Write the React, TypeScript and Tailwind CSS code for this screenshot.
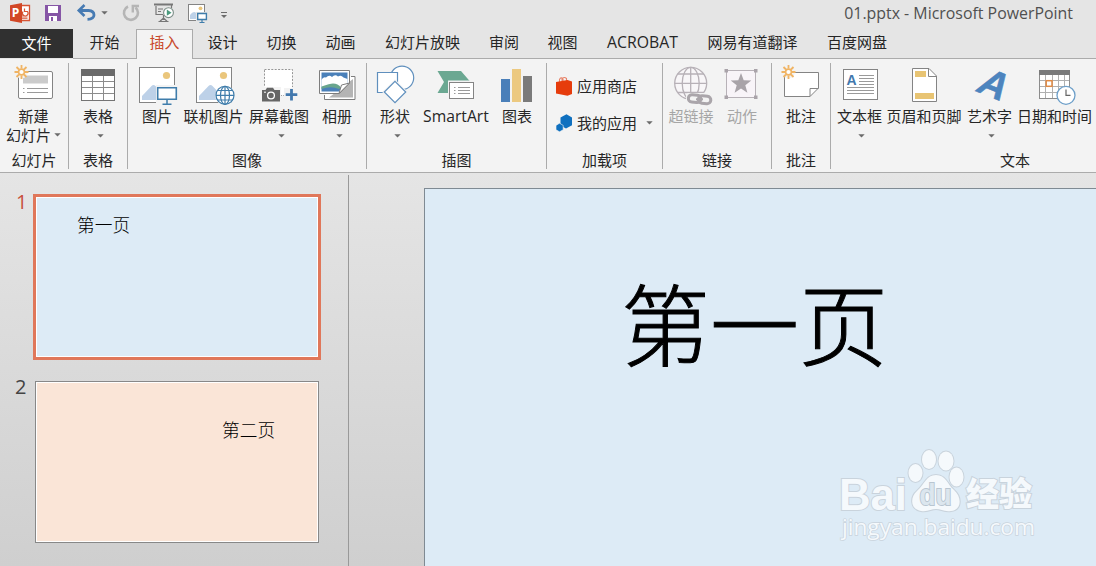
import React from 'react';

/** A single large button in the ribbon. */
interface RibbonButtonProps {
    /** Caption below the icon. */
    label: string;
    /** Tailwind width class of the button. */
    width: string;
    /** Contents of the 44x40 icon. */
    icon: React.ReactNode;
    /** Whether a dropdown caret is shown. */
    caret?: boolean;
    disabled?: boolean;
}

interface RibbonGroupProps {
    title: string;
    width: string;
    children: React.ReactNode;
}

const Caret: React.FC = () => (
    <svg width="7" height="4" viewBox="0 0 7 4" className="shrink-0">
        <path d="M0.3 0.3H6.7L3.5 3.6Z" fill="#6b6b6b" />
    </svg>
);

const RibbonIcon: React.FC<{ children: React.ReactNode }> = ({ children }) => (
    <svg width="44" height="40" viewBox="0 0 44 40" fill="none" className="shrink-0 overflow-visible">{children}</svg>
);

const RibbonButton: React.FC<RibbonButtonProps> = ({ label, width, icon, caret, disabled }) => (
    <div className={`flex shrink-0 flex-col items-center ${width}`}>
        <RibbonIcon>{icon}</RibbonIcon>
        <div className={`h-[22px] leading-[22px] whitespace-nowrap ${disabled ? 'text-[#a6a6a6]' : ''} ${label === 'SmartArt' ? 'text-[15.7px]' : ''}`}>
            {label}
        </div>
        {caret && <div className="mt-[7px] ml-[4px] flex h-1"><Caret /></div>}
    </div>
);

/** Ribbon section with its title at the bottom and a separator on the right. */
const RibbonGroup: React.FC<RibbonGroupProps> = ({ title, width, children }) => (
    <div className={`flex h-[106px] shrink-0 flex-col border-r border-[#ababab] ${width}`}>
        <div className="flex h-[86px] pt-0.5">{children}</div>
        <div className="h-5 text-center leading-[22px] whitespace-nowrap">{title}</div>
    </div>
);

/** Orange burst that marks "new" commands. */
const Burst: React.FC = () => (
    <>
        <circle cx="9.5" cy="7" r="6.5" fill="#f3f3f3" />
        <path
            d="M9.5 0V3.5M9.5 10.5V14M2.5 7H6M13 7H16.5M4.5 2L7 4.5M12 9.5L14.5 12M14.5 2L12 4.5M7 9.5L4.5 12"
            stroke="#f0b464"
            strokeWidth="1.8"
        />
        <circle cx="9.5" cy="7" r="2.9" fill="#fff" stroke="#f0b464" strokeWidth="1.6" />
    </>
);

const PhotoFrame: React.FC = () => (
    <>
        <rect x="4.5" y="2.5" width="35" height="35" fill="#fff" stroke="#848484" />
        <circle cx="31.5" cy="10.5" r="3.6" fill="#eac67c" />
        <path d="M7 35V31L16.5 21Q18.5 19 20.5 21L34 35Z" fill="#bdd1e8" />
    </>
);

const newSlideIcon = (
    <>
        <rect x="6.5" y="6.5" width="34" height="27" rx="1.5" fill="#fff" stroke="#848484" />
        <path d="M11 10.5H36V18.5H11Z" fill="#cbcbcb" />
        <path d="M11 23.5H12.5M15 23.5H36M11 27.5H12.5M15 27.5H36" stroke="#9a9a9a" />
        <Burst />
    </>
);

const tableIcon = (
    <>
        <rect x="5.5" y="4.5" width="33" height="31" fill="#fff" stroke="#747474" />
        <path d="M5 4H39V11H5Z" fill="#6a6a6a" />
        <path d="M16.5 11V35M27.5 11V35M6 16.5H38M6 22.5H38M6 28.5H38" stroke="#8c8c8c" />
    </>
);

const pictureIcon = (
    <>
        <PhotoFrame />
        <path d="M21 20H43V40H21Z" fill="#f3f3f3" />
        <path d="M22.7 22.7H41.3V34.3H22.7Z" fill="#fff" stroke="#3f7dab" strokeWidth="1.6" />
        <path d="M32 35V39M27.5 39.2H36.5" stroke="#3f7dab" strokeWidth="1.5" />
    </>
);

const onlinePictureIcon = (
    <>
        <PhotoFrame />
        <circle cx="33" cy="30.3" r="9.8" fill="#f3f3f3" />
        <g stroke="#3f7dab" strokeWidth="1.2">
            <circle cx="33" cy="30.3" r="9" fill="#fff" />
            <ellipse cx="33" cy="30.3" rx="4.5" ry="9" />
            <path d="M33 21V39.5M24 30.3H42M25.5 25.5H40.5M25.5 35H40.5" />
        </g>
    </>
);

const screenshotIcon = (
    <>
        <rect x="7.5" y="4.5" width="28" height="26" fill="#fff" stroke="#969696" strokeDasharray="2 1.4" />
        <path d="M4 22H24V38H4ZM27 22H41V37H27Z" fill="#f3f3f3" />
        <path d="M24 22H27V30H24ZM27 22H35V23H27Z" fill="#fff" />
        <path d="M5 25H8.5L10 22.8H16L17.5 25H23V36.5H5Z" fill="#666" />
        <circle cx="14" cy="30.5" r="3.4" fill="#666" stroke="#fff" strokeWidth="1.3" />
        <path d="M7 27.2H9" stroke="#fff" />
        <path d="M34.5 24V35.5M28.7 29.7H40.3" stroke="#4278ad" strokeWidth="2.8" />
    </>
);

const albumIcon = (
    <>
        <path d="M9.5 30V34.5H40V11.5H36" fill="#fff" stroke="#7d7d7d" />
        <path d="M14 32.5L38 14V32.5Z" fill="#b4b4b4" />
        <path d="M4.5 5.5H34.5V18L24.5 28.5H4.5Z" fill="#fff" stroke="#7d7d7d" />
        <path d="M6.5 7.5H32.5V17.5L24 26.5H6.5Z" fill="#4a80b9" />
        <path d="M6.5 17V15Q8 11.5 11 12.5Q14 9.5 17 12Q20 9 23 11.5Q26 9.5 28.5 12.5L32.5 14V18L26 22H6.5Z" fill="#fff" />
        <path d="M6.5 21.5Q15 18.5 18 18.5Q23 18.5 26 22.5L24 24Q16 20.5 6.5 24Z" fill="#69a58d" />
        <path d="M24 28.5L26.5 20L34.5 18Z" fill="#fff" stroke="#7d7d7d" />
    </>
);

const shapesIcon = (
    <g fill="#fff" stroke="#5f8fbd" strokeWidth="1.2">
        <circle cx="29" cy="12.8" r="11.7" />
        <path d="M4.5 7.5H24.5V27.5H4.5Z" />
        <path d="M22 16.3L32.7 27L22 37.7L11.3 27Z" stroke="#f3f3f3" strokeWidth="3" />
        <path d="M22 16.3L32.7 27L22 37.7L11.3 27Z" />
    </g>
);

const smartArtIcon = (
    <>
        <path d="M3.5 6H27L36.5 17L27 28H3.5L10 17Z" fill="#6ba892" />
        <path d="M14 15.5H41V35H14Z" fill="#f3f3f3" />
        <rect x="15.5" y="17.5" width="24" height="16" fill="#fff" stroke="#848484" />
        <path d="M20 22.5H21.5M24 22.5H36M20 25.5H21.5M24 25.5H36M20 28.5H21.5M24 28.5H36" stroke="#9a9a9a" />
    </>
);

const chartIcon = (
    <>
        <path d="M6 14H15V37H6Z" fill="#4a7fb9" />
        <path d="M17 4H26V37H17Z" fill="#ecc980" />
        <path d="M28 11H37V37H28Z" fill="#7a7a7a" />
    </>
);

const hyperlinkIcon = (
    <>
        <g stroke="#b7b1b7" strokeWidth="1.3">
            <circle cx="21.7" cy="18.3" r="16" fill="#f8f6f8" />
            <ellipse cx="21.7" cy="18.3" rx="8.5" ry="16" />
            <path d="M21.7 2V34M5.7 18.3H37.7M8.5 9H35M8.5 27.5H35" />
        </g>
        <path d="M19 28H41L44 31V40H19L17 36V30Z" fill="#f3f3f3" />
        <rect x="19.3" y="30" width="12.5" height="7.4" rx="3.7" stroke="#aaa5aa" strokeWidth="3" transform="rotate(6 26 34)" />
        <rect x="29.3" y="31" width="12.5" height="7.4" rx="3.7" stroke="#aaa5aa" strokeWidth="3" transform="rotate(6 35 35)" />
        <path d="M27 34.3H34" stroke="#aaa5aa" strokeWidth="2" />
    </>
);

const actionIcon = (
    <>
        <rect x="6.5" y="5.5" width="29" height="27" fill="#f8f4f8" stroke="#b7b1b7" />
        <path d="M4.5 4H8V7.5H4.5ZM34 4H37.5V7.5H34ZM4.5 30.5H8V34H4.5ZM34 30.5H37.5V34H34Z" fill="#a9a3a9" />
        <path d="M21 8L23.7 15.2L31.3 15.5L25.3 20.3L27.4 27.7L21 23.4L14.6 27.7L16.7 20.3L10.7 15.5L18.3 15.2Z" fill="#a8a3a8" />
    </>
);

const commentIcon = (
    <>
        <path d="M5.5 7.5H39.5V23L31 31.5H5.5Z" fill="#fff" stroke="#848484" />
        <path d="M31 31.5V23.5H39.5" stroke="#848484" />
        <Burst />
    </>
);

const textBoxIcon = (
    <>
        <rect x="5.5" y="4.5" width="34" height="30" fill="#fff" stroke="#848484" />
        <text x="8.6" y="20" fill="#4278ad" fontSize="14" fontWeight="700" fontFamily="Liberation Sans, sans-serif">A</text>
        <path d="M21 10.5H36M21 13.5H36M21 16.5H36M21 19.5H36M9 22.5H36M9 25.5H36M9 28.5H36" stroke="#9a9a9a" />
    </>
);

const headerFooterIcon = (
    <>
        <path d="M10.5 3.5H27L34.5 11V36.5H10.5Z" fill="#fff" stroke="#848484" />
        <path d="M26.5 3.5V11.5H34.5" stroke="#848484" />
        <path d="M13 6H24V12H13ZM13 28H32V34H13Z" fill="#e8c473" />
    </>
);

const wordArtIcon = (
    <text
        x="0"
        y="0"
        fill="#4d84be"
        stroke="#4d84be"
        strokeWidth="0.5"
        fontSize="39"
        fontWeight="700"
        fontFamily="Liberation Sans, sans-serif"
        transform="translate(6 25.5) rotate(22) skewX(-12)"
    >
        A
    </text>
);

const dateTimeIcon = (
    <>
        <rect x="6.5" y="5.5" width="30" height="28" fill="#fff" stroke="#8c8c8c" />
        <path d="M6 5H37V10H6Z" fill="#7a7a7a" />
        <path d="M12.5 10V33M19.5 10V33M25.5 10V33M31.5 10V33M7 15.5H36M7 21.5H36M7 27.5H36" stroke="#b0b0b0" />
        <rect x="13.2" y="15.7" width="5.8" height="5.6" fill="#fff" stroke="#e08a45" strokeWidth="1.5" />
        <circle cx="33" cy="30.3" r="9" fill="#fff" stroke="#6d9fc9" strokeWidth="1.3" />
        <path d="M33 24.5V30.3H37.5" stroke="#666" strokeWidth="1.2" />
    </>
);

const tabs = [
    { label: '开始', width: 'w-[63px]' },
    { label: '插入', width: 'w-[57px]', active: true },
    { label: '设计', width: 'w-[59px]' },
    { label: '切换', width: 'w-[59px]' },
    { label: '动画', width: 'w-[59px]' },
    { label: '幻灯片放映', width: 'w-[105px]' },
    { label: '审阅', width: 'w-[58px]' },
    { label: '视图', width: 'w-[59px]' },
    { label: 'ACROBAT', width: 'w-[101px] text-[15.8px]' },
    { label: '网易有道翻译', width: 'w-[119px]' },
    { label: '百度网盘', width: 'w-[90px]' },
];

const QuickIcon: React.FC<{ children: React.ReactNode }> = ({ children }) => (
    <svg width="22" height="22" viewBox="0 0 22 22" fill="none" className="shrink-0">{children}</svg>
);

const TitleBar: React.FC = () => (
    <div className="flex h-[29px] items-start justify-between pt-px pr-[23px] pl-[9px]">
        <div className="flex items-center pt-px">
            <div className="flex gap-[11px]">
                <QuickIcon>
                    <path d="M12 3.5H20.5V18.5H12Z" fill="#fff" stroke="#d65535" strokeWidth="1.3" />
                    <path d="M14 9.5A2.8 2.8 0 1 0 18.5 9.5H15.5V6.5M13 14H18.5M13 16.2H18.5" stroke="#d65535" strokeWidth="1.2" />
                    <path d="M1 3.3L13 1V21L1 18.8Z" fill="#d24726" />
                    <text x="2.7" y="15.3" fill="#fff" fontSize="12" fontWeight="700" fontFamily="Open Sans, sans-serif">P</text>
                </QuickIcon>
                <QuickIcon>
                    <path d="M3 3H19V19H3Z" fill="#8656a6" />
                    <path d="M6 4H16V11H6ZM7 14H15V19H7Z" fill="#fff" />
                    <path d="M9 15H11V19H9Z" fill="#8656a6" />
                </QuickIcon>
                <QuickIcon>
                    <path d="M4 8.5H13.5Q19 8.8 19 13Q19 17 12.5 17.3" stroke="#477bb3" strokeWidth="2.8" />
                    <path d="M9.5 3L3.8 8.5L9.5 14" stroke="#477bb3" strokeWidth="2.6" />
                </QuickIcon>
            </div>
            <div className="mr-3 ml-1 flex w-[7px]"><Caret /></div>
            <div className="flex gap-[11px]">
                <QuickIcon>
                    <path d="M8 4.5A7 7 0 1 0 15.5 5.5" stroke="#b5b5b5" strokeWidth="2.6" />
                    <path d="M12.8 10.5V4H19" stroke="#b5b5b5" strokeWidth="2.4" />
                </QuickIcon>
                <QuickIcon>
                    <path d="M1 2.5H20" stroke="#777" strokeWidth="2" />
                    <path d="M3 4V12.5H10M18.5 3V6M10.5 13V18M7 19.3L10.5 16L14 19.3M5.5 19.5H15.5M5 7H10M5 9.5H8" stroke="#777" strokeWidth="1.2" />
                    <circle cx="15.5" cy="10.7" r="4.9" fill="#fff" stroke="#7c8d87" strokeWidth="1.1" />
                    <path d="M13.8 7.6V13.8L18.6 10.7Z" fill="#4a9a7d" />
                </QuickIcon>
                <QuickIcon>
                    <rect x="2.5" y="2.5" width="16" height="16" fill="#fff" stroke="#848484" />
                    <circle cx="14.5" cy="6.3" r="1.9" fill="#eac67c" />
                    <path d="M4 17V13Q8 7.5 11 12V17Z" fill="#bdd1e8" />
                    <path d="M10 10H22V21H10Z" fill="#e5e5e5" />
                    <path d="M11.7 11.5H20.4V17.5H11.7Z" fill="#fff" stroke="#3f7dab" strokeWidth="1.4" />
                    <path d="M16 18V20.5M13.5 20.5H18.5" stroke="#3f7dab" strokeWidth="1.2" />
                </QuickIcon>
            </div>
            <svg width="8" height="8" viewBox="0 0 8 8" className="mt-1 ml-3">
                <path d="M1 1.5H7" stroke="#6b6b6b" />
                <path d="M1 4H7L4 7Z" fill="#6b6b6b" />
            </svg>
        </div>
        <div className="text-[15.9px] leading-6 text-[#505050]">01.pptx - Microsoft PowerPoint</div>
    </div>
);

const TabBar: React.FC = () => (
    <div className="flex h-[30px] leading-[26px]">
        <div className="h-[29px] w-[73px] bg-[#303030] text-center leading-7 text-white">文件</div>
        {tabs.map((tab) => tab.active ? (
            <div key={tab.label} className={`border border-b-0 border-[#ababab] bg-[#f3f3f3] text-center leading-6 text-[#c94a2c] ${tab.width}`}>
                {tab.label}
            </div>
        ) : (
            <div key={tab.label} className={`border-b border-[#ababab] text-center whitespace-nowrap ${tab.width}`}>{tab.label}</div>
        ))}
        <div className="grow border-b border-[#ababab]" />
    </div>
);

const Ribbon: React.FC = () => (
    <div className="flex h-[114px] overflow-hidden border-b border-[#ababab] bg-[#f3f3f3] pt-1">
        <RibbonGroup title="幻灯片" width="w-[69px]">
            <div className="flex w-[67px] shrink-0 flex-col items-center">
                <RibbonIcon>{newSlideIcon}</RibbonIcon>
                <div className="mt-px h-5 leading-5">新建</div>
                <div className="flex items-center gap-[3px] leading-[18px] whitespace-nowrap">
                    <span>幻灯片</span>
                    <Caret />
                </div>
            </div>
        </RibbonGroup>
        <RibbonGroup title="表格" width="w-[59px]">
            <RibbonButton label="表格" width="w-[58px]" icon={tableIcon} caret />
        </RibbonGroup>
        <RibbonGroup title="图像" width="w-[239px]">
            <div className="flex pl-1">
                <RibbonButton label="图片" width="w-[50px]" icon={pictureIcon} />
                <RibbonButton label="联机图片" width="w-[63px]" icon={onlinePictureIcon} />
                <RibbonButton label="屏幕截图" width="w-[68px]" icon={screenshotIcon} caret />
                <RibbonButton label="相册" width="w-[48px]" icon={albumIcon} caret />
            </div>
        </RibbonGroup>
        <RibbonGroup title="插图" width="w-[180px]">
            <div className="flex pl-[3px]">
                <RibbonButton label="形状" width="w-[50px]" icon={shapesIcon} caret />
                <RibbonButton label="SmartArt" width="w-[72px]" icon={smartArtIcon} />
                <RibbonButton label="图表" width="w-[50px]" icon={chartIcon} />
            </div>
        </RibbonGroup>
        <RibbonGroup title="加载项" width="w-[116px]">
            <div className="flex w-full flex-col gap-[13px] pt-[9px] pl-[9px]">
                <div className="flex h-6 items-center gap-[5px]">
                    <svg width="16" height="20" viewBox="0 0 16 20" fill="none">
                        <path d="M3.5 6V3.5Q5 0.5 7 3V5M6 5V3Q8 0.2 10.5 2.5V5" stroke="#e8846a" strokeWidth="1.1" />
                        <path d="M0 6L11.5 4L16 5.5V18L11.5 19.8L0 17.5Z" fill="#e63c0c" />
                    </svg>
                    <span>应用商店</span>
                </div>
                <div className="flex h-6 items-center gap-[5px] whitespace-nowrap">
                    <svg width="16" height="18" viewBox="0 0 16 18">
                        <path d="M10.5 0.3L16 3.5V11.3L10 14.5L4.5 11.5V3.5Z" fill="#0f70bf" />
                        <path d="M3.5 9.2L7.2 11.4V15.8L3.5 17.8L0 15.8V11.4Z" fill="#0f70bf" stroke="#f3f3f3" strokeWidth="0.6" />
                    </svg>
                    <span className="mr-1">我的应用</span>
                    <Caret />
                </div>
            </div>
        </RibbonGroup>
        <RibbonGroup title="链接" width="w-[109px]">
            <div className="flex pl-[3px]">
                <RibbonButton label="超链接" width="w-[50px]" icon={hyperlinkIcon} disabled />
                <RibbonButton label="动作" width="w-[52px]" icon={actionIcon} disabled />
            </div>
        </RibbonGroup>
        <RibbonGroup title="批注" width="w-[59px]">
            <RibbonButton label="批注" width="w-[58px]" icon={commentIcon} />
        </RibbonGroup>
        <RibbonGroup title="文本" width="w-[369px]">
            <div className="flex pl-[3px]">
                <RibbonButton label="文本框" width="w-[51px]" icon={textBoxIcon} caret />
                <RibbonButton label="页眉和页脚" width="w-[78px]" icon={headerFooterIcon} />
                <RibbonButton label="艺术字" width="w-[53px]" icon={wordArtIcon} caret />
                <RibbonButton label="日期和时间" width="w-[77px]" icon={dateTimeIcon} />
            </div>
        </RibbonGroup>
    </div>
);

const ThumbnailPane: React.FC = () => (
    <div className="mt-0.5 flex w-[349px] shrink-0 flex-col border-r border-[#999] pt-[19px] text-[20px] text-[#444]">
        <div className="flex h-[166px]">
            <div className="w-[33px] pl-4 leading-4 text-[#c8503c]">1</div>
            <div className="h-[166px] w-[288px] border-[3px] border-[#e0775a] bg-white p-px">
                <div className="h-full bg-[#ddebf6] pt-[15px] pl-10 text-[17.7px] leading-6 font-light text-black">第一页</div>
            </div>
        </div>
        <div className="mt-[21px] flex h-[162px]">
            <div className="w-[35px] pl-[15px] leading-3">2</div>
            <div className="h-[162px] w-[284px] border border-[#888] bg-white p-px">
                <div className="h-full bg-[#fae5d7] pt-[35px] pl-[185px] text-[17.7px] leading-6 font-light text-black">第二页</div>
            </div>
        </div>
        <div className="mt-[23px] pl-[15px] leading-[14px]">3</div>
    </div>
);

const Watermark: React.FC = () => (
    <svg width="204" height="100" viewBox="0 0 204 100" className="absolute top-[255px] left-[411px]">
        <g fill="#f5f9fc" stroke="#c9d3dc" strokeWidth="2" paintOrder="stroke" fontFamily="Open Sans, Noto Sans CJK SC, sans-serif">
            <text x="3" y="65.5" fontSize="45" fontWeight="700" fontFamily="Liberation Sans, sans-serif" textLength="68" lengthAdjust="spacingAndGlyphs">Bai</text>
            <ellipse cx="79.5" cy="29" rx="7" ry="9" />
            <ellipse cx="93" cy="15.5" rx="7" ry="9.5" />
            <ellipse cx="110" cy="17" rx="7.5" ry="9.5" />
            <ellipse cx="120.5" cy="33" rx="7" ry="9.5" />
            <path d="M100 31C110 31 111 40 118 46C126 53 126 66 115 67C108 68 105 65 100 65C95 65 92 68 85 67C74 65 74 53 81 47C89 40 90 31 100 31Z" />
            <text x="83.5" y="61" fontSize="29" fill="#dce6ee" stroke="#b9c6d1" strokeWidth="2" fontWeight="700" fontFamily="Liberation Sans, sans-serif" textLength="32" lengthAdjust="spacingAndGlyphs">du</text>
            <text x="130" y="62" fontSize="33" fontWeight="900" textLength="66" lengthAdjust="spacingAndGlyphs">经验</text>
            <text x="6" y="91" fontSize="21.5" fontWeight="500" strokeWidth="1.4" textLength="193" lengthAdjust="spacingAndGlyphs">jingyan.baidu.com</text>
        </g>
    </svg>
);

const SlideEditor: React.FC = () => (
    <div className="grow pt-[15px] pl-[75px]">
        <div className="relative h-[400px] border-t border-l border-[#7f8a93] bg-[#ddebf6] pt-[86px] pl-[196px]">
            <div className="text-[89px] leading-[100px] font-light whitespace-nowrap text-black [-webkit-text-stroke:1px_black]">第一页</div>
            <Watermark />
        </div>
    </div>
);

const App: React.FC = () => {
    return (
        <div className="flex h-[566px] w-[1096px] flex-col overflow-hidden bg-[#e5e5e5] font-['Open_Sans','Noto_Sans_CJK_SC',sans-serif] text-[15px] text-[#262626]">
            <TitleBar />
            <TabBar />
            <Ribbon />
            <div className="flex h-[393px] overflow-hidden bg-linear-to-b from-[#e5e5e5] to-[#cfcfcf]">
                <ThumbnailPane />
                <SlideEditor />
            </div>
        </div>
    );
}

export default App;
